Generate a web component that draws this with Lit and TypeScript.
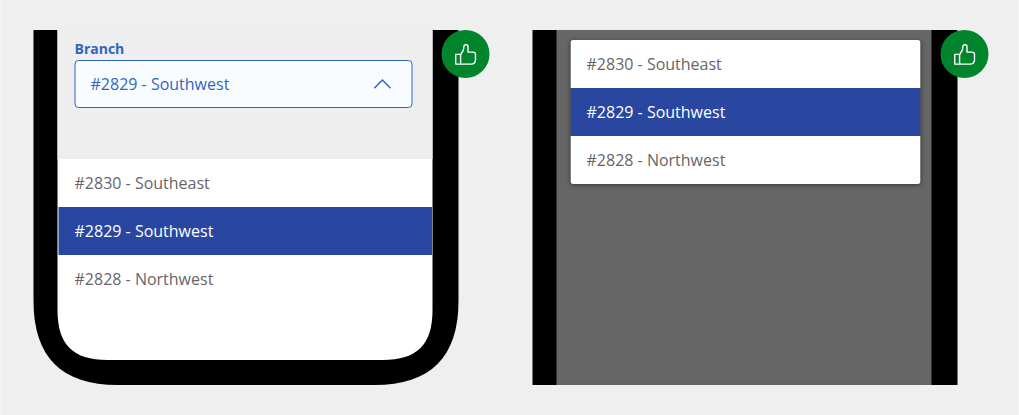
import { LitElement, html, svg, css } from "lit";
import { customElement, property } from "lit/decorators.js";

const BRANCHES = ["#2830 - Southeast", "#2829 - Southwest", "#2828 - Northwest"];
const SELECTED = "#2829 - Southwest";

@customElement("thumb-badge")
class ThumbBadge extends LitElement {
  static styles = css`
    :host { display: block; width: 49px; height: 48px; }
    svg { display: block; }
  `;
  render() {
    return html`<svg width="49" height="48" viewBox="0 0 49 48" fill="none">
      <circle cx="24.5" cy="24" r="24" fill="#02842c" />
      <g stroke="#fff" stroke-width="1.4" stroke-linejoin="round">
        <path d="M14.7 24.4H19.6V34.1H14.7Z" />
        <path d="M19.6 24.6L22.2 20.4C22.6 19.6 22.7 18.6 22.8 17C22.9 15.4 23.6 14.6 24.9 14.6C26.3 14.6 27 15.4 27 17V22.1H32C33.7 22.1 34.5 23 34.5 24.6V29.4C34.5 32.8 33.3 34.1 30 34.1H19.6" />
      </g>
    </svg>`;
  }
}

@customElement("option-list")
class OptionList extends LitElement {
  @property({ type: Array }) options: string[] = [];
  @property() selected = "";
  static styles = css`
    :host { display: block; }
    .option {
      height: 48px;
      line-height: 48px;
      padding-left: var(--option-inset, 16px);
      font-size: 16px;
      color: #666;
      background: #fff;
    }
    .option.selected {
      color: #fff;
      background: linear-gradient(to right, var(--option-edge, #2947a1) 1px, #2947a1 1px);
    }
  `;
  render() {
    return this.options.map(
      (o) => html`<div class="option ${o === this.selected ? "selected" : ""}">${o}</div>`
    );
  }
}

@customElement("app-root")
class AppRoot extends LitElement {
  static styles = css`
    :host {
      display: block;
      box-sizing: border-box;
      height: 415px;
      background: #efefef;
      border: solid #f4f4f4;
      border-width: 0 1px;
      font-family: "Open Sans", "Noto Sans", sans-serif;
    }
    .stage {
      display: flex;
      gap: 73px;
      padding: 30px 0 0 32px;
    }
    .phone {
      display: grid;
      position: relative;
      width: 426px;
      height: 355px;
    }
    .frame { grid-area: 1 / 1; display: block; }
    .screen {
      grid-area: 1 / 1;
      display: flow-root;
      width: 374px;
      padding-left: 25px;
      z-index: 1;
    }
    .drawer { --option-inset: 16.5px; --option-edge: #94a3d0; }
    .field { padding: 9px 19px 0 16px; height: 120px; }
    .label {
      padding: 0 0 1px 0.5px;
      font-size: 14px;
      font-weight: 700;
      line-height: 20px;
      color: #2f66c2;
    }
    .select { display: grid; height: 48px; }
    .outline { grid-area: 1 / 1; display: block; }
    .value {
      grid-area: 1 / 1;
      z-index: 1;
      display: flex;
      align-items: center;
      justify-content: space-between;
      padding: 0 20px 0 16.5px;
      color: #2f66c2;
      font-size: 16px;
    }
    .menu {
      width: 350px;
      margin: 10px 0 0 13px;
      border-radius: 3px;
      overflow: hidden;
      box-shadow: 0 1px 4px rgba(0, 0, 0, 0.45);
      transform: translateX(0.5px);
    }
    .badge { position: absolute; left: 408px; top: 0; z-index: 2; }
  `;

  frame(kind: "rounded" | "cropped") {
    const rounded = svg`
      <path d="M.5 0H425.5V271C425.5 327 397.5 355 341.5 355H84.5C28.5 355 .5 327 .5 271Z" fill="#000" />
      <path d="M24.5 0H399.5V280C399.5 314.7 384.2 330 349.5 330H74.5C39.8 330 24.5 314.7 24.5 280Z" fill="#fff" />
      <path d="M24.5 0H399.5V129H24.5Z" fill="#eee" />`;
    const cropped = svg`
      <path d="M.5 0H425.5V355H.5Z" fill="#000" />
      <path d="M24.5 0H399.5V355H24.5Z" fill="#666" />`;
    return html`<svg class="frame" width="426" height="355" viewBox="0 0 426 355">
      ${kind === "rounded" ? rounded : cropped}
    </svg>`;
  }

  render() {
    return html`<div class="stage">
      <div class="phone">
        ${this.frame("rounded")}
        <div class="screen">
          <div class="field">
            <div class="label">Branch</div>
            <div class="select">
              <svg class="outline" width="339" height="48" viewBox="0 0 339 48">
                <rect x="1" y=".5" width="337" height="47" rx="3.5" fill="#f9fcff" stroke="#2f66c2" />
              </svg>
              <div class="value">
                <span>${SELECTED}</span>
                <svg width="20" height="12" viewBox="0 0 20 12" fill="none">
                  <path d="M1.3 10.2L9.4 2L17.5 10.2" stroke="#2f66c2" stroke-width="1.5" />
                </svg>
              </div>
            </div>
          </div>
          <option-list class="drawer" .options=${BRANCHES} .selected=${SELECTED}></option-list>
        </div>
        <thumb-badge class="badge"></thumb-badge>
      </div>
      <div class="phone">
        ${this.frame("cropped")}
        <div class="screen">
          <div class="menu">
            <option-list .options=${BRANCHES} .selected=${SELECTED}></option-list>
          </div>
        </div>
        <thumb-badge class="badge"></thumb-badge>
      </div>
    </div>`;
  }
}
